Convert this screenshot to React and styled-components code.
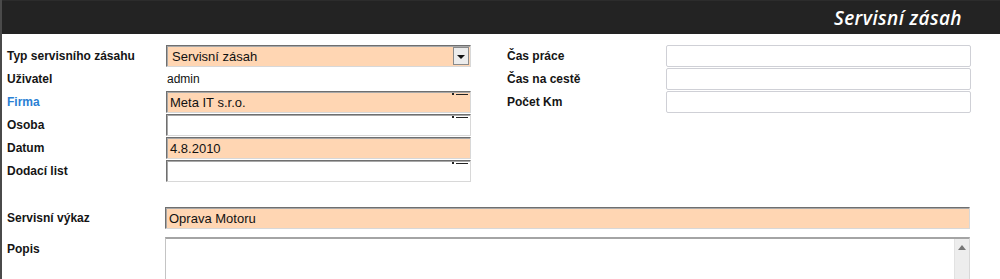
import React from 'react'
import styled, { createGlobalStyle } from 'styled-components'

const Global = createGlobalStyle`
  body {
    margin: 0;
    background: #fff;
  }
`

const Page = styled.div`
  width: 1000px;
  height: 279px;
  box-sizing: border-box;
  border-left: 2px solid #4a4a4a;
  overflow: hidden;
  background: #fff;
  font-family: 'Liberation Sans', Arial, sans-serif;
`

const Header = styled.div`
  height: 34px;
  background: #232323;
  border-top: 1px solid #2c2c2c;
  box-sizing: border-box;
  display: flex;
  align-items: center;
  justify-content: flex-end;
  padding-right: 38px;
`

const Title = styled.h1`
  margin: 0;
  color: #fff;
  font-family: 'Open Sans', sans-serif;
  font-style: italic;
  font-weight: 600;
  font-size: 19px;
  letter-spacing: 0.4px;
`

const Top = styled.div`
  display: flex;
  padding: 11px 0 0 5px;
`

const Grid = styled.div`
  display: grid;
  grid-template-columns: 159px 305px;
  grid-auto-rows: 22px;
  row-gap: 1px;
  align-items: center;
  margin-left: ${p => p.$offset || 0}px;
`

const Label = styled.label`
  font-family: 'Liberation Sans', Arial, sans-serif;
  font-weight: 700;
  font-size: 12px;
  color: ${p => (p.$link ? '#2a7fd4' : '#151515')};
  align-self: ${p => (p.$top ? 'start' : 'center')};
  padding-top: ${p => (p.$top ? '5px' : 0)};
`

const Value = styled.div`
  font-family: 'Liberation Sans', Arial, sans-serif;
  font-size: 12px;
  color: #111;
  padding-left: 1px;
`

const Field = styled.div`
  position: relative;
  height: ${p => p.$h || 22}px;
  box-sizing: border-box;
  background: ${p => (p.$fill ? '#ffd6b3' : '#fff')};
  border: 1px solid;
  border-color: #6f6f6f #d8d8d8 #d8d8d8 #6f6f6f;
  box-shadow: inset 1px 1px 0 #a8a8a8;
  display: flex;
  align-items: center;
  padding-left: 3px;
  font-size: 13px;
  color: #111;
`

const Marker = styled.span`
  position: absolute;
  top: 1px;
  right: 2px;
  display: flex;
  align-items: center;
  gap: 2px;
  &::before {
    content: '';
    width: 2px;
    height: 2px;
    background: #222;
  }
  &::after {
    content: '';
    width: 12px;
    height: 1px;
    background: #222;
  }
`

const SelectBox = styled(Field)`
  padding-right: 0;
  justify-content: space-between;
  padding-left: 5px;
`

const DropButton = styled.span`
  width: 16px;
  height: 18px;
  margin-right: 1px;
  box-sizing: border-box;
  background: #ececec;
  border: 1px solid #8a8a8a;
  display: flex;
  align-items: center;
  justify-content: center;
  &::after {
    content: '';
    border-left: 4px solid transparent;
    border-right: 4px solid transparent;
    border-top: 4px solid #111;
    margin-top: 1px;
  }
`

const PlainInput = styled.div`
  height: 22px;
  box-sizing: border-box;
  border: 1px solid #cfd0d6;
  border-radius: 2px;
  background: #fff;
`

const Bottom = styled.div`
  display: grid;
  grid-template-columns: 158px 805px;
  padding: 25px 0 0 5px;
  row-gap: 8px;
  align-items: center;
`

const Area = styled.div`
  height: 60px;
  box-sizing: border-box;
  border: 1px solid;
  border-color: #a4a4a4 #d8d8d8 #d8d8d8 #c4c4c4;
  border-top-width: 2px;
  display: flex;
  justify-content: flex-end;
  background: #fff;
`

const Scroll = styled.div`
  width: 14px;
  background: #ededed;
  border-left: 1px solid #e2e2e2;
  display: flex;
  justify-content: center;
  padding-top: 6px;
  &::after {
    content: '';
    width: 0;
    height: 0;
    border-left: 4px solid transparent;
    border-right: 4px solid transparent;
    border-bottom: 5px solid #777;
  }
`

const Input = ({ fill, marker, children }) => (
  <Field $fill={fill}>
    {children}
    {marker && <Marker />}
  </Field>
)

export default function App() {
  return (
    <>
      <Global />
      <Page>
        <Header>
          <Title>Servisní zásah</Title>
        </Header>
        <Top>
          <Grid>
            <Label>Typ servisního zásahu</Label>
            <SelectBox $fill>
              Servisní zásah
              <DropButton />
            </SelectBox>
            <Label>Uživatel</Label>
            <Value>admin</Value>
            <Label $link>Firma</Label>
            <Input fill marker>Meta IT s.r.o.</Input>
            <Label>Osoba</Label>
            <Input marker />
            <Label>Datum</Label>
            <Input fill>4.8.2010</Input>
            <Label>Dodací list</Label>
            <Input marker />
          </Grid>
          <Grid $offset={36}>
            <Label>Čas práce</Label>
            <PlainInput />
            <Label>Čas na cestě</Label>
            <PlainInput />
            <Label>Počet Km</Label>
            <PlainInput />
          </Grid>
        </Top>
        <Bottom>
          <Label>Servisní výkaz</Label>
          <Input fill>Oprava Motoru</Input>
          <Label $top>Popis</Label>
          <Area>
            <Scroll />
          </Area>
        </Bottom>
      </Page>
    </>
  )
}
